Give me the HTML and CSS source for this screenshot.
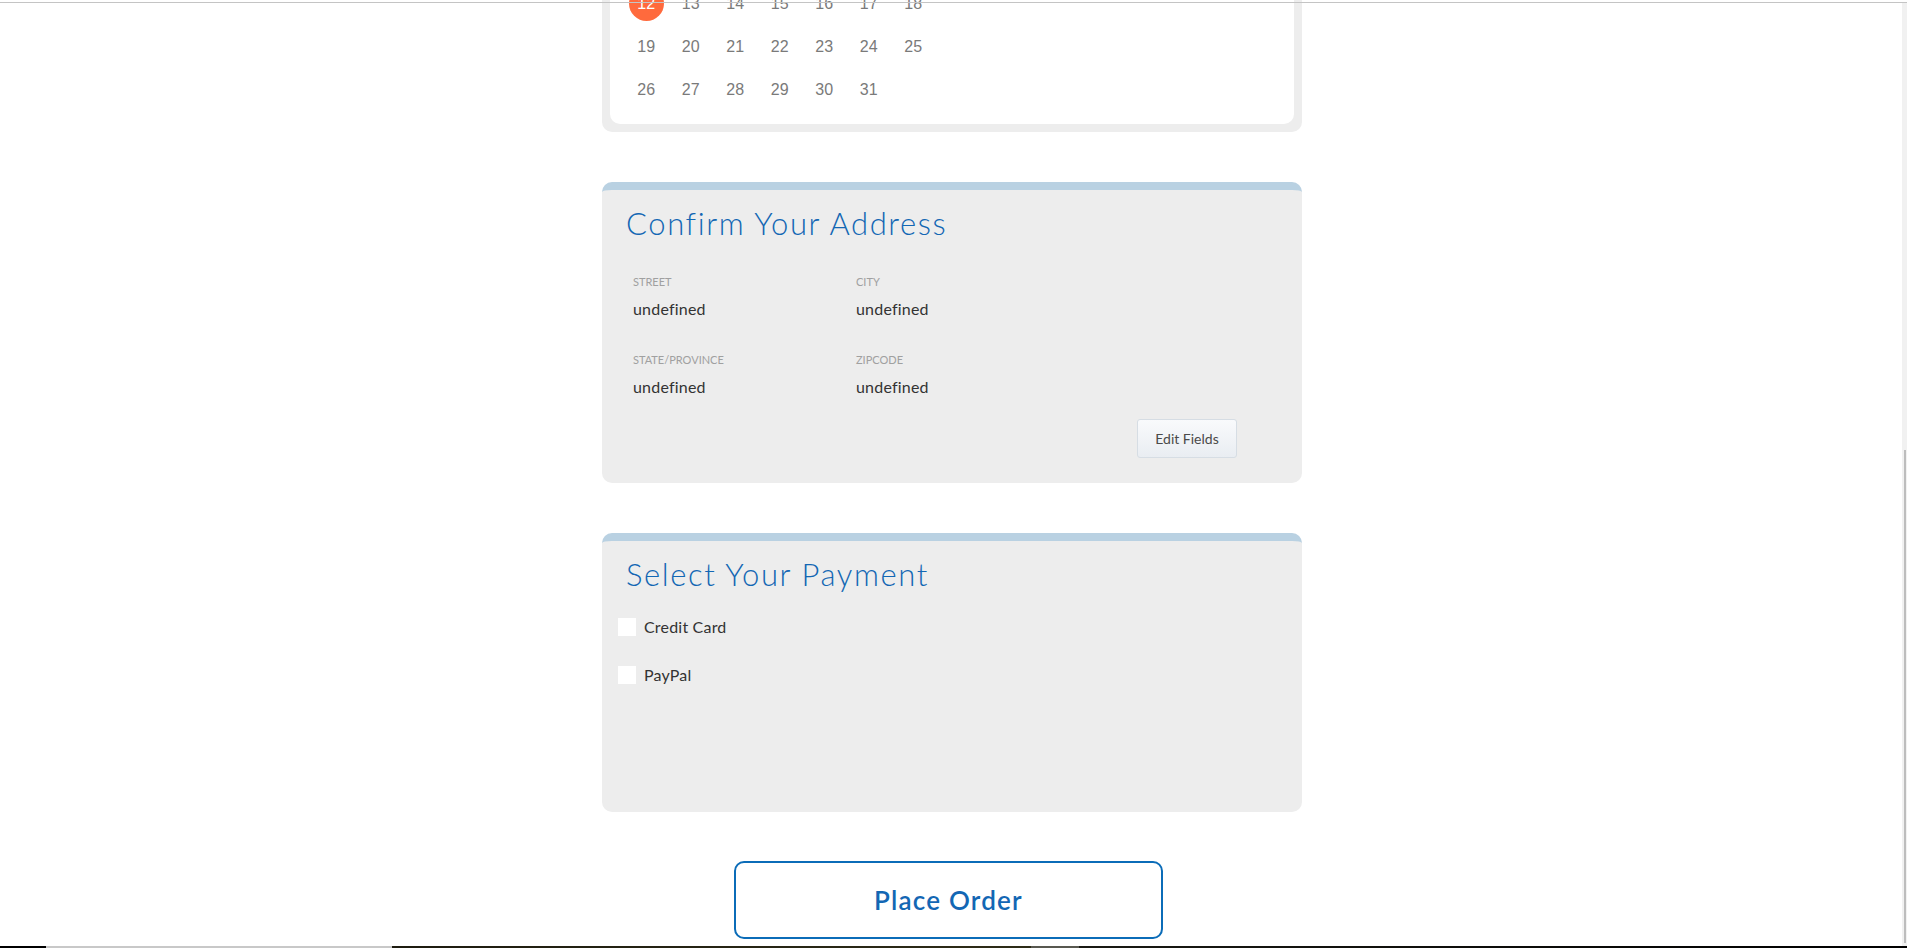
FILE: index.html
```html
<!DOCTYPE html>
<html lang="en">
<head>
<meta charset="utf-8">
<title>Checkout</title>
<link rel="stylesheet" href="styles.css">
</head>
<body>
<div class="page">
  <section class="calendar-card">
    <div class="calendar-inner">
      <div class="cal-grid">
        <span class="day"></span><span class="day"></span><span class="day"></span>
        <span class="day">1</span><span class="day">2</span><span class="day">3</span><span class="day">4</span>
        <span class="day">5</span><span class="day">6</span><span class="day">7</span><span class="day">8</span><span class="day">9</span><span class="day">10</span><span class="day">11</span>
        <span class="day"><span class="day-selected">12</span></span><span class="day">13</span><span class="day">14</span><span class="day">15</span><span class="day">16</span><span class="day">17</span><span class="day">18</span>
        <span class="day">19</span><span class="day">20</span><span class="day">21</span><span class="day">22</span><span class="day">23</span><span class="day">24</span><span class="day">25</span>
        <span class="day">26</span><span class="day">27</span><span class="day">28</span><span class="day">29</span><span class="day">30</span><span class="day">31</span>
      </div>
    </div>
  </section>

  <section class="panel">
    <h2 class="panel-title">Confirm Your Address</h2>
    <div class="address-grid">
      <div class="field">
        <div class="field-label">Street</div>
        <div class="field-value">undefined</div>
      </div>
      <div class="field">
        <div class="field-label">City</div>
        <div class="field-value">undefined</div>
      </div>
      <div class="field">
        <div class="field-label">State/Province</div>
        <div class="field-value">undefined</div>
      </div>
      <div class="field">
        <div class="field-label">Zipcode</div>
        <div class="field-value">undefined</div>
      </div>
    </div>
    <div class="panel-actions">
      <button class="btn-edit" type="button">Edit Fields</button>
    </div>
  </section>

  <section class="panel panel-payment">
    <h2 class="panel-title">Select Your Payment</h2>
    <div class="options">
      <label class="option"><span class="checkbox"></span><span class="option-text">Credit Card</span></label>
      <label class="option"><span class="checkbox"></span><span class="option-text">PayPal</span></label>
    </div>
  </section>

  <div class="order-wrap">
    <button class="btn-order" type="button">Place Order</button>
  </div>
</div>

<div class="chrome-top"></div>
<div class="chrome-scroll"><div class="chrome-thumb"></div></div>
<div class="chrome-bottom"></div>
</body>
</html>
```

FILE: styles.css
```css
html, body {
  margin: 0;
  padding: 0;
  overflow: hidden;
  background: #ffffff;
}

body {
  font-family: "Lato", "Liberation Sans", sans-serif;
  color: #333333;
  height: 948px;
}

.page {
  width: 700px;
  margin: 0 auto;
  padding-right: 3px;
}

/* Calendar */
.calendar-card {
  margin-top: -126px;
  background: #ededed;
  padding: 8px;
  border-radius: 10px;
}

.calendar-inner {
  background: #ffffff;
  border-radius: 10px;
  padding: 14px 14px 13px 14px;
}

.cal-grid {
  display: grid;
  grid-template-columns: repeat(7, 44.5px);
  grid-auto-rows: 43px;
}

.day {
  display: flex;
  align-items: center;
  justify-content: center;
  font-family: "Liberation Sans", Arial, sans-serif;
  font-size: 16px;
  line-height: 43px;
  color: #7a7a7a;
}

.day-selected {
  display: flex;
  align-items: center;
  justify-content: center;
  width: 35px;
  height: 35px;
  line-height: 35px;
  border-radius: 50%;
  background: #ff6a3d;
  color: #ffffff;
}

/* Panels */
.panel {
  margin-top: 50px;
  background: #ededed;
  border-top: 8px solid #b9d1e2;
  border-radius: 10px;
}

.panel-title {
  margin: 0;
  padding: 15px 24px 0 24px;
  font-size: 31px;
  line-height: 36px;
  font-weight: 300;
  letter-spacing: 1.6px;
  color: #1367b4;
}

.address-grid {
  display: grid;
  grid-template-columns: 223px 223px;
  row-gap: 34px;
  padding: 34px 0 0 31px;
}

.field-label {
  font-size: 11px;
  line-height: 14px;
  text-transform: uppercase;
  color: #a0a0a0;
}

.field-value {
  margin-top: 10px;
  font-size: 16px;
  line-height: 20px;
  letter-spacing: 0.2px;
  color: #333333;
}

.panel-actions {
  display: flex;
  justify-content: flex-end;
  padding: 22px 65px 25px 0;
}

.btn-edit {
  width: 100px;
  height: 39px;
  border: 1px solid #d6dde4;
  border-radius: 3px;
  background: linear-gradient(#f9fafc, #e9edf2);
  font-family: "Lato", "Liberation Sans", sans-serif;
  font-size: 14px;
  color: #4a4a4a;
  padding: 0;
}

/* Payment */
.panel-payment {
  padding-bottom: 128px;
}

.options {
  display: flex;
  flex-direction: column;
  gap: 30px;
  padding: 26px 0 0 16px;
}

.option {
  display: flex;
  align-items: center;
  gap: 8px;
  height: 18px;
  font-size: 16px;
  line-height: 20px;
  letter-spacing: 0.2px;
  color: #333333;
}

.checkbox {
  width: 18px;
  height: 18px;
  background: #ffffff;
}

/* Order */
.order-wrap {
  display: flex;
  justify-content: center;
  padding-top: 49px;
}

.btn-order {
  width: 429px;
  height: 78px;
  border: 2px solid #0b6cb8;
  border-radius: 10px;
  background: #ffffff;
  font-family: "Lato", "Liberation Sans", sans-serif;
  font-size: 26px;
  font-weight: 600;
  letter-spacing: 1.2px;
  color: #1367b4;
  margin-right: 7px;
}

/* Window chrome overlays */
.chrome-top {
  position: fixed;
  top: 2px;
  left: 0;
  right: 0;
  height: 1px;
  background: #c4c4c4;
}

.chrome-scroll {
  position: fixed;
  top: 3px;
  right: 0;
  bottom: 2px;
  width: 5px;
  background: #f1f1f1;
}

.chrome-thumb {
  position: absolute;
  top: 447px;
  bottom: 3px;
  left: 2px;
  width: 2px;
  background: #bdbdbd;
}

.chrome-bottom {
  position: fixed;
  left: 0;
  right: 0;
  bottom: 0;
  height: 2px;
  background: linear-gradient(to right, #000 0, #000 46px, #c8c8c8 46px, #c8c8c8 392px, #1e1c10 392px, #2e2c18 1031px, #585850 1031px, #585850 1079px, #1a1a14 1079px, #000 1907px);
}
```
